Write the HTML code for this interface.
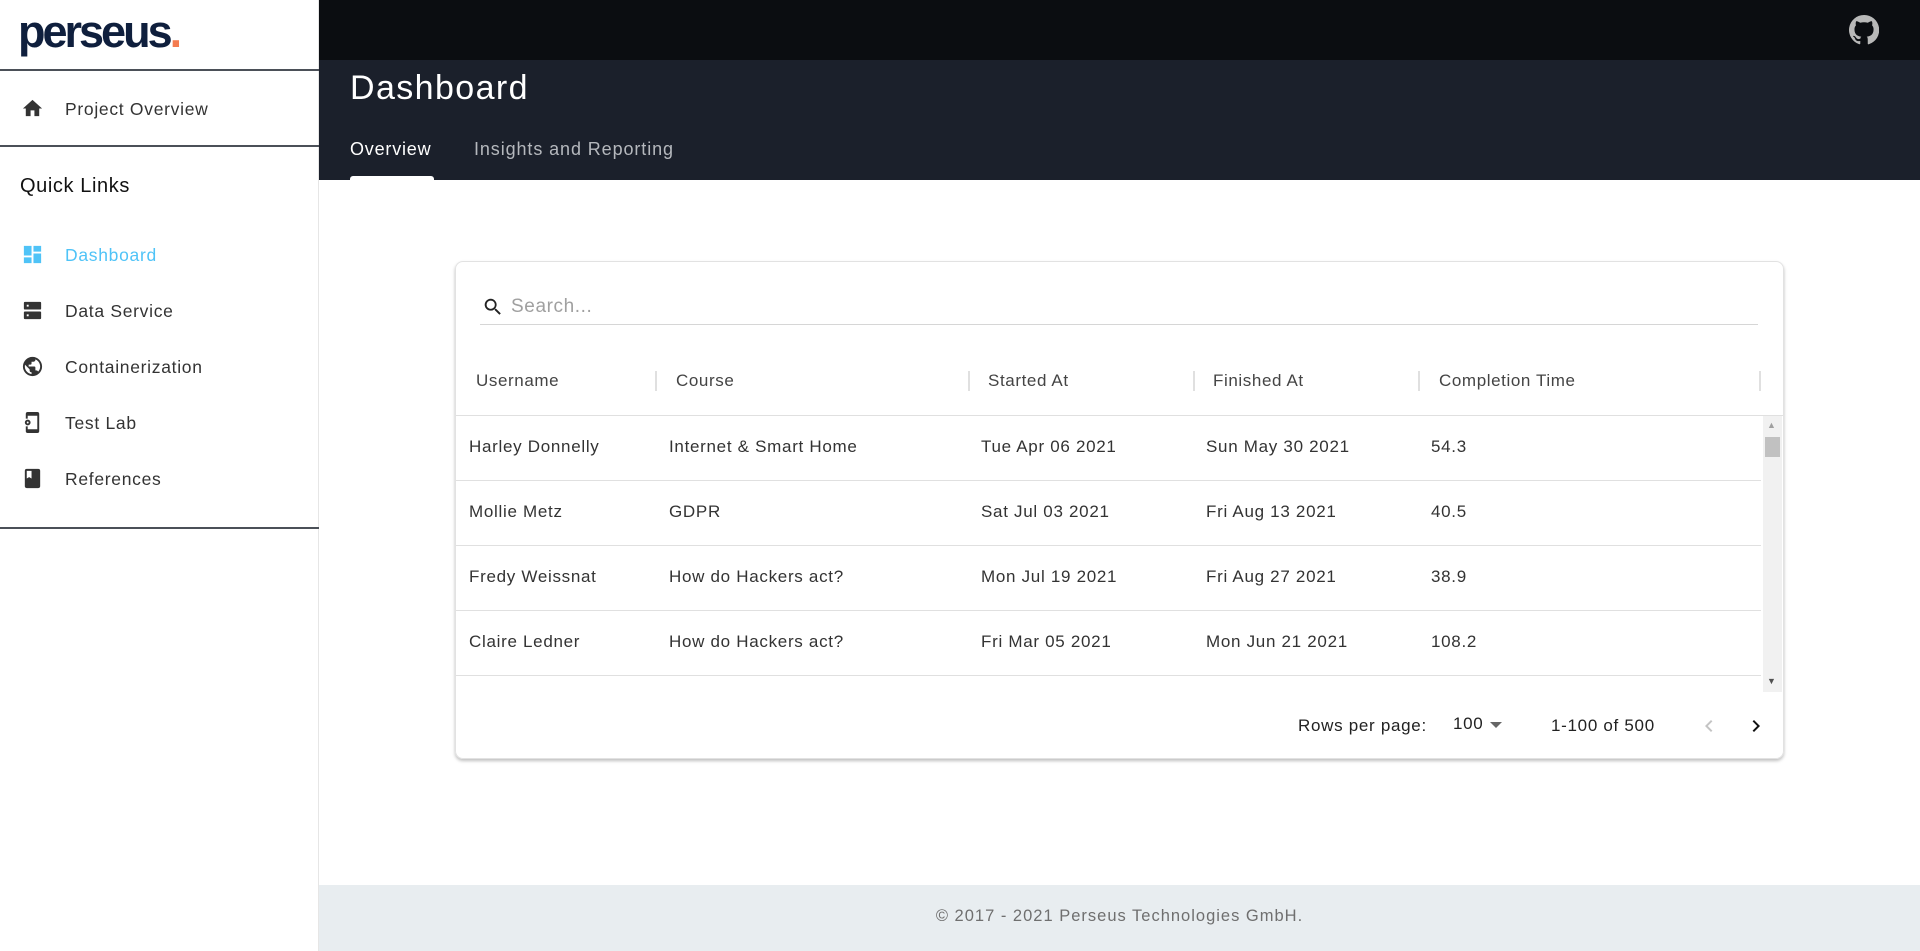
<!DOCTYPE html>
<html><head><meta charset="utf-8">
<style>
*{margin:0;padding:0;box-sizing:border-box}
body{width:1920px;height:951px;overflow:hidden;font-family:"Liberation Sans",sans-serif;background:#fff;position:relative;color:#333}
.abs{position:absolute}
.side{left:0;top:0;width:319px;height:951px;background:#fff;border-right:1px solid #e6e6e6}
.logo{left:18px;top:6px;font-size:45px;font-weight:bold;color:#0f1f3d;letter-spacing:-3px}
.logo span{color:#f47b4f}
.hr{left:0;width:319px;height:2px;background:#4b5058}
.nav{left:65px;font-size:17.5px;color:#333;line-height:20px;letter-spacing:.7px}
.ico{left:21px;width:23px;height:23px}
.top{left:319px;top:0;width:1601px;height:60px;background:#0b0d11}
.head{left:319px;top:60px;width:1601px;height:120px;background:#1b202b}
.card{left:455px;top:261px;width:1329px;height:498px;border:1px solid #e2e2e2;border-radius:8px;box-shadow:0 2px 3px rgba(0,0,0,.25)}
.th{top:371px;font-size:17px;color:#444;line-height:20px;letter-spacing:.6px}
.sep{top:371px;width:2px;height:20px;background:#e0e0e0}
.td{font-size:17px;color:#333;line-height:20px;letter-spacing:.7px}
.rl{left:456px;width:1305px;height:1px;background:#e0e0e0}
</style></head><body>
<div class="abs side"></div>
<div class="abs logo">perseus<span>.</span></div>
<div class="abs hr" style="top:69px"></div>
<svg class="abs ico" style="top:97px" viewBox="0 0 24 24"><path fill="#333" d="M10 20v-6h4v6h5v-8h3L12 3 2 12h3v8z"/></svg>
<div class="abs nav" style="top:99px">Project Overview</div>
<div class="abs hr" style="top:145px"></div>
<div class="abs" style="left:20px;top:175px;font-size:20px;color:#111;letter-spacing:.6px">Quick Links</div>
<svg class="abs ico" style="top:243px" viewBox="0 0 24 24"><path fill="#4fc3f7" d="M3 13h8V3H3v10zm0 8h8v-6H3v6zm10 0h8V11h-8v10zm0-18v6h8V3h-8z"/></svg>
<div class="abs nav" style="top:245px;color:#4fc3f7">Dashboard</div>
<svg class="abs ico" style="top:299px" viewBox="0 0 24 24"><path fill="#333" d="M4 3h16a1 1 0 011 1v6a1 1 0 01-1 1H4a1 1 0 01-1-1V4a1 1 0 011-1zm0 10h16a1 1 0 011 1v6a1 1 0 01-1 1H4a1 1 0 01-1-1v-6a1 1 0 011-1zM6 6v2h2V6H6zm0 10v2h2v-2H6z"/></svg>
<div class="abs nav" style="top:301px">Data Service</div>
<svg class="abs ico" style="top:355px" viewBox="0 0 24 24"><path fill="#333" d="M12 2a10 10 0 100 20 10 10 0 000-20zm-1 17.9A8 8 0 014 12c0-.6.1-1.2.2-1.8L9 15v1a2 2 0 002 2v1.9zm6.9-2.5A2 2 0 0016 16h-1v-3a1 1 0 00-1-1H8v-2h2a1 1 0 001-1V7h2a2 2 0 002-2v-.4a8 8 0 012.9 12.8z"/></svg>
<div class="abs nav" style="top:357px">Containerization</div>
<svg class="abs ico" style="top:411px" viewBox="0 0 24 24"><path fill="#333" d="M17 1H7a2 2 0 00-2 2v5h2V5h10v14H7v-3H5v5a2 2 0 002 2h10a2 2 0 002-2V3a2 2 0 00-2-2zM7 9a3 3 0 100 6 3 3 0 000-6zm0 4a1 1 0 110-2 1 1 0 010 2z"/></svg>
<div class="abs nav" style="top:413px">Test Lab</div>
<svg class="abs ico" style="top:467px" viewBox="0 0 24 24"><path fill="#333" d="M18 2H6a2 2 0 00-2 2v16a2 2 0 002 2h12a2 2 0 002-2V4a2 2 0 00-2-2zM6 4h5v8l-2.5-1.5L6 12V4z"/></svg>
<div class="abs nav" style="top:469px">References</div>
<div class="abs hr" style="top:527px"></div>

<div class="abs top"></div>
<svg class="abs" style="left:1849px;top:15px;width:30px;height:30px" viewBox="0 0 16 16"><path fill="#b8b8b8" d="M8 0a8 8 0 00-2.53 15.59c.4.07.55-.17.55-.38v-1.34c-2.230.48-2.7-1.07-2.7-1.07-.36-.92-.89-1.17-.89-1.17-.73-.5.06-.49.06-.49.8.06 1.23.83 1.23.83.71 1.22 1.870.87 2.33.66.07-.52.28-.87.51-1.07-1.78-.2-3.650-.89-3.650-3.95 0-.87.31-1.59.82-2.15-.08-.2-.36-1.02.08-2.12 0 0 .67-.21 2.2.82a7.6 7.6 0 014 0c1.53-1.04 2.2-.82 2.2-.82.44 1.1.16 1.92.08 2.12.51.56.82 1.27.82 2.15 0 3.07-1.87 3.75-3.65 3.95.29.25.54.73.54 1.48v2.2c0 .21.15.46.55.38A8 8 0 008 0z"/></svg>
<div class="abs head"></div>
<div class="abs" style="left:350px;top:69px;font-size:34px;color:#fff;letter-spacing:1.4px">Dashboard</div>
<div class="abs" style="left:350px;top:139px;font-size:18px;color:#fff;letter-spacing:.8px">Overview</div>
<div class="abs" style="left:474px;top:139px;font-size:18px;color:#b5b8bd;letter-spacing:.9px">Insights and Reporting</div>
<div class="abs" style="left:350px;top:176px;width:84px;height:4px;background:#fff;border-radius:3px 3px 0 0"></div>

<div class="abs card"></div>
<svg class="abs" style="left:482px;top:296px;width:22px;height:22px" viewBox="0 0 24 24"><path fill="#222" d="M15.5 14h-.8l-.3-.3A6.5 6.5 0 109.5 16a6.5 6.5 0 004.2-1.6l.3.3v.8l5 5 1.5-1.5-5-5zm-6 0a4.5 4.5 0 110-9 4.5 4.5 0 010 9z"/></svg>
<div class="abs" style="left:511px;top:296px;font-size:19px;color:#a0a0a0;letter-spacing:.6px">Search...</div>
<div class="abs" style="left:480px;top:324px;width:1278px;height:1px;background:#d6d6d6"></div>

<div class="abs th" style="left:476px">Username</div>
<div class="abs sep" style="left:655px"></div>
<div class="abs th" style="left:676px">Course</div>
<div class="abs sep" style="left:968px"></div>
<div class="abs th" style="left:988px">Started At</div>
<div class="abs sep" style="left:1193px"></div>
<div class="abs th" style="left:1213px">Finished At</div>
<div class="abs sep" style="left:1418px"></div>
<div class="abs th" style="left:1439px">Completion Time</div>
<div class="abs sep" style="left:1759px"></div>
<div class="abs rl" style="top:415px;width:1327px"></div>

<div class="abs" style="left:1763px;top:416px;width:19px;height:276px;background:#f1f1f1"></div>
<div class="abs" style="left:1765px;top:437px;width:15px;height:20px;background:#c1c1c1"></div>
<div class="abs" style="left:1767px;top:420px;font-size:9px;color:#a0a0a0">▲</div>
<div class="abs" style="left:1767px;top:676px;font-size:9px;color:#505050">▼</div>

<div class="abs td" style="left:469px;top:437px">Harley Donnelly</div>
<div class="abs td" style="left:669px;top:437px">Internet &amp; Smart Home</div>
<div class="abs td" style="left:981px;top:437px">Tue Apr 06 2021</div>
<div class="abs td" style="left:1206px;top:437px">Sun May 30 2021</div>
<div class="abs td" style="left:1431px;top:437px">54.3</div>
<div class="abs rl" style="top:480px"></div>
<div class="abs td" style="left:469px;top:502px">Mollie Metz</div>
<div class="abs td" style="left:669px;top:502px">GDPR</div>
<div class="abs td" style="left:981px;top:502px">Sat Jul 03 2021</div>
<div class="abs td" style="left:1206px;top:502px">Fri Aug 13 2021</div>
<div class="abs td" style="left:1431px;top:502px">40.5</div>
<div class="abs rl" style="top:545px"></div>
<div class="abs td" style="left:469px;top:567px">Fredy Weissnat</div>
<div class="abs td" style="left:669px;top:567px">How do Hackers act?</div>
<div class="abs td" style="left:981px;top:567px">Mon Jul 19 2021</div>
<div class="abs td" style="left:1206px;top:567px">Fri Aug 27 2021</div>
<div class="abs td" style="left:1431px;top:567px">38.9</div>
<div class="abs rl" style="top:610px"></div>
<div class="abs td" style="left:469px;top:632px">Claire Ledner</div>
<div class="abs td" style="left:669px;top:632px">How do Hackers act?</div>
<div class="abs td" style="left:981px;top:632px">Fri Mar 05 2021</div>
<div class="abs td" style="left:1206px;top:632px">Mon Jun 21 2021</div>
<div class="abs td" style="left:1431px;top:632px">108.2</div>
<div class="abs rl" style="top:675px"></div>

<div class="abs td" style="left:1298px;top:716px;color:#222">Rows per page:</div>
<div class="abs td" style="left:1453px;top:714px;color:#222">100</div>
<div class="abs" style="left:1490px;top:722px;width:0;height:0;border-left:6px solid transparent;border-right:6px solid transparent;border-top:6px solid #666"></div>
<div class="abs td" style="left:1551px;top:716px;color:#222">1-100 of 500</div>
<svg class="abs" style="left:1697px;top:714px;width:24px;height:24px" viewBox="0 0 24 24"><path fill="#c4c4c4" d="M15.4 7.4L14 6l-6 6 6 6 1.4-1.4L10.8 12z"/></svg>
<svg class="abs" style="left:1744px;top:714px;width:24px;height:24px" viewBox="0 0 24 24"><path fill="#111" d="M10 6L8.6 7.4 13.2 12l-4.6 4.6L10 18l6-6z"/></svg>

<div class="abs" style="left:319px;top:885px;width:1601px;height:66px;background:#e8edf0"></div>
<div class="abs" style="left:319px;top:907px;width:1601px;text-align:center;font-size:16.5px;color:#6f6f6f;letter-spacing:1px">© 2017 - 2021 Perseus Technologies GmbH.</div>
</body></html>
